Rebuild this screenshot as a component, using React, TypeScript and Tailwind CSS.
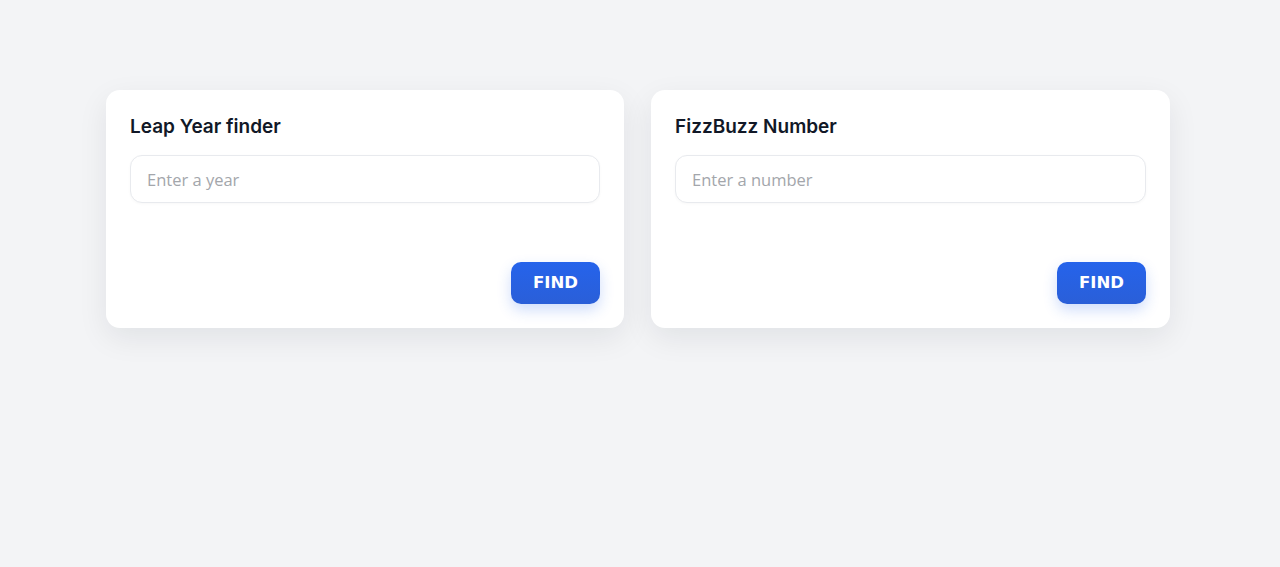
import React from "react";

function Card({ title, placeholder }: { title: string; placeholder: string }) {
  return (
    <div className="flex flex-col rounded-[14px] bg-white px-6 pt-[25px] pb-6 shadow-[0_10px_30px_rgba(17,24,39,0.08)]">
      <h2 className="text-[19px] leading-6 font-semibold text-[#111827] [font-family:Inter,'Noto_Sans',sans-serif]">
        {title}
      </h2>
      <input
        type="text"
        placeholder={placeholder}
        className="mt-4 h-12 w-full rounded-xl border border-[#e8eaee] bg-white px-4 text-[16.5px] text-[#374151] placeholder:text-[#a3a6ab] shadow-[0_1px_3px_rgba(0,0,0,0.03)] outline-none [font-family:'Open_Sans',sans-serif]"
      />
      <div className="mt-[59px] flex justify-end">
        <button className="h-[42px] w-[89px] rounded-[10px] bg-gradient-to-b from-[#2563eb] to-[#2a5fd8] pt-[1px] text-[16.5px] font-bold text-white shadow-[0_6px_14px_rgba(37,99,235,0.22)] [font-family:'DejaVu_Sans',sans-serif]">
          FIND
        </button>
      </div>
    </div>
  );
}

export default function App() {
  return (
    <div className="min-h-[567px] w-full bg-[#f3f4f6] pt-[90px]">
      <div className="ml-[106px] grid w-[1064px] grid-cols-[518px_519px] gap-[27px]">
        <Card title="Leap Year finder" placeholder="Enter a year" />
        <Card title="FizzBuzz Number" placeholder="Enter a number" />
      </div>
    </div>
  );
}
